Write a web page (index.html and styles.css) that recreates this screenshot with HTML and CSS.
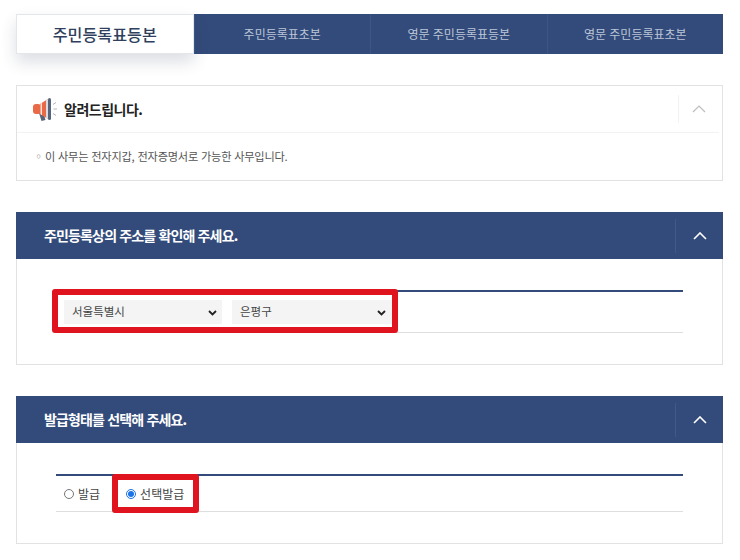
FILE: index.html
```html
<!DOCTYPE html>
<html lang="ko">
<head>
    <meta charset="UTF-8">
    <title>주민등록표등본</title>
    <link rel="stylesheet" href="styles.css">
</head>
<body>

    <div class="container">
        <!-- Tabs -->
        <ul class="tabs">
            <li class="tab active">주민등록표등본</li>
            <li class="tab">주민등록표초본</li>
            <li class="tab">영문 주민등록표등본</li>
            <li class="tab">영문 주민등록표초본</li>
        </ul>

        <!-- Notice -->
        <div class="notice">
            <div class="notice-head">
                <svg class="horn" width="26" height="24" viewBox="0 0 26 24">
                    <path d="M7 16h4.500l2 7-4 1z" fill="#56657a"/>
                    <rect x="1" y="7" width="8" height="10" rx="3" fill="#ea6a47"/>
                    <path d="M8 7l8-5v20l-8-5z" fill="#ea6a47"/>
                    <path d="M8.500 6.700l1.500-.9v12.400l-1.500-.9z" fill="#fbe3da"/>
                    <path d="M14 3.200l2-1.200v20l-2-1.200z" fill="#d9dde2"/>
                    <rect x="16" y="1" width="3" height="22" rx="1.500" fill="#56657a"/>
                    <path d="M21 7.500l3-2M21.500 12h3.500M21 16.500l3 2" stroke="#a6aeb7" stroke-width="0.900" fill="none"/>
                </svg>
                <h2>알려드립니다.</h2>
                <button class="toggle">
                    <svg width="14" height="8" viewBox="0 0 14 8"><path d="M1 7l6-6 6 6" fill="none" stroke="#bdbdbd" stroke-width="1.200"/></svg>
                </button>
            </div>
            <p class="notice-text"><span class="dot">◦</span>이 사무는 전자지갑, 전자증명서로 가능한 사무입니다.</p>
        </div>

        <!-- Address -->
        <div class="section">
            <div class="section-head">
                <h3>주민등록상의 주소를 확인해 주세요.</h3>
                <button class="toggle">
                    <svg width="14" height="8" viewBox="0 0 14 8"><path d="M1 7l6-6 6 6" fill="none" stroke="#fff" stroke-width="1.600"/></svg>
                </button>
            </div>
            <div class="section-body body-address">
                <div class="field-row">
                    <div class="sel-wrap sel-city">
                        <select class="sel"><option>서울특별시</option></select>
                        <svg class="chevron" width="9" height="6" viewBox="0 0 9 6"><path d="M1 1l3.500 3.500L8 1" fill="none" stroke="#222" stroke-width="1.800"/></svg>
                    </div>
                    <div class="sel-wrap sel-gu">
                        <select class="sel"><option>은평구</option></select>
                        <svg class="chevron" width="9" height="6" viewBox="0 0 9 6"><path d="M1 1l3.500 3.500L8 1" fill="none" stroke="#222" stroke-width="1.800"/></svg>
                    </div>
                    <div class="mark mark-address"></div>
                </div>
            </div>
        </div>

        <!-- Issue type -->
        <div class="section">
            <div class="section-head">
                <h3>발급형태를 선택해 주세요.</h3>
                <button class="toggle">
                    <svg width="14" height="8" viewBox="0 0 14 8"><path d="M1 7l6-6 6 6" fill="none" stroke="#fff" stroke-width="1.600"/></svg>
                </button>
            </div>
            <div class="section-body body-type">
                <div class="field-row radio-row">
                    <label class="radio"><input type="radio" name="kind">발급</label>
                    <label class="radio"><input type="radio" name="kind" checked>선택발급</label>
                    <div class="mark mark-type"></div>
                </div>
            </div>
        </div>
    </div>

</body>
</html>
```

FILE: styles.css
```css
body {
    font-family: "Noto Sans CJK KR", "Noto Sans", sans-serif;
    background-color: #ffffff;
    margin: 0;
    padding: 0;
    color: #333;
}

.container {
    width: 707px;
    margin-left: 16px;
    padding-top: 14px;
}

/* Tabs */
.tabs {
    display: flex;
    list-style: none;
    margin: 0;
    padding: 0;
    height: 40px;
    background-color: #334b7a;
}

.tab {
    flex: 1 1 0;
    box-sizing: border-box;
    display: flex;
    align-items: center;
    justify-content: center;
    padding-bottom: 1px;
    font-size: 12px;
    color: #bcc6d8;
    border-left: 1px solid #3d5585;
}

.tab.active {
    background-color: #fff;
    color: #2f3f5c;
    font-size: 16.200px;
    font-weight: 500;
    border: 1px solid #e3e6ea;
    box-shadow: 0 8px 16px rgba(40, 50, 80, 0.16);
}

/* Notice */
.notice {
    margin-top: 31px;
    height: 96px;
    box-sizing: border-box;
    border: 1px solid #e2e2e2;
}

.notice-head {
    display: flex;
    align-items: center;
    height: 46px;
    margin-right: 3px;
    padding-left: 15px;
    border-bottom: 1px solid #f2f2f2;
}

.horn {
    margin-right: 6px;
}

.notice-head h2 {
    flex: 1;
    margin: 0;
    font-size: 14px;
    font-weight: 700;
    letter-spacing: -0.5px;
    color: #222;
}

.notice-head .toggle {
    height: 28px;
    width: 41px;
    border-left: 1px solid #f2f2f2;
}

.toggle {
    display: flex;
    align-items: center;
    justify-content: center;
    padding: 0;
    border: none;
    background: none;
}

.notice-text {
    margin: 0;
    padding: 13px 0 0 16px;
    font-size: 11.200px;
    line-height: 20px;
    color: #555;
    letter-spacing: -0.2px;
}

.dot {
    color: #999;
    margin-right: 1px;
}

/* Sections */
.section {
    margin-top: 31px;
}

.section-head {
    display: flex;
    align-items: center;
    height: 47px;
    background-color: #334b7a;
    padding-left: 28px;
}

.section-head h3 {
    flex: 1;
    margin: 0;
    padding-bottom: 1px;
    font-size: 14px;
    font-weight: 700;
    letter-spacing: -0.85px;
    color: #fff;
}

.section-head .toggle {
    width: 48px;
    height: 34px;
    border-left: 1px solid #40588a;
}

.section-body {
    box-sizing: border-box;
    border: 1px solid #e2e2e2;
    border-top: none;
    padding: 31px 39px 0;
}

.body-address {
    height: 106px;
}

.body-type {
    height: 101px;
}

.field-row {
    position: relative;
    display: flex;
    align-items: center;
    gap: 10px;
    height: 43px;
    box-sizing: border-box;
    padding-left: 8px;
    border-top: 2px solid #334b7a;
    border-bottom: 1px solid #dedede;
}

.sel-wrap {
    position: relative;
    height: 24px;
    background-color: #f4f4f4;
}

.sel-city {
    width: 158px;
}

.sel-gu {
    width: 160px;
}

.sel {
    appearance: none;
    display: block;
    box-sizing: border-box;
    width: 100%;
    height: 21px;
    border: none;
    border-radius: 0;
    background: none;
    font-family: inherit;
    font-size: 11.500px;
    color: #444;
    padding: 0 0 0 8px;
}

.chevron {
    position: absolute;
    right: 5px;
    top: 10px;
}

.sel-gu .chevron {
    right: 6px;
}

.radio-row {
    height: 38px;
    gap: 26px;
}

.radio {
    display: flex;
    align-items: center;
    gap: 4px;
    font-size: 12px;
    color: #444;
}

.radio input {
    width: 10px;
    height: 10px;
    margin: 0;
    accent-color: #1a73e8;
}

/* Red highlight boxes over the form */
.mark {
    position: absolute;
    box-sizing: border-box;
    border: 6px solid #e0141f;
    border-radius: 3px;
}

.mark-address {
    left: -4px;
    top: -3px;
    width: 346px;
    height: 44px;
}

.mark-type {
    left: 56px;
    top: -2px;
    width: 87px;
    height: 39px;
}
```
